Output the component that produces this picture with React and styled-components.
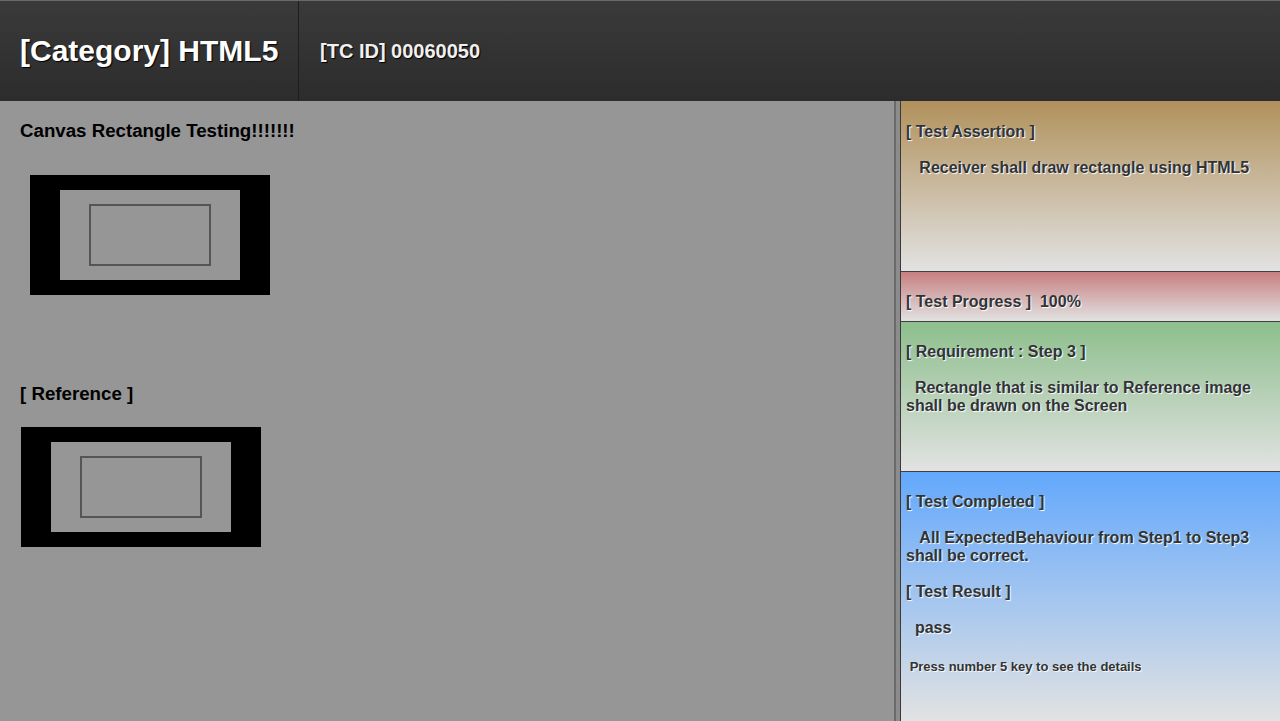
import React from 'react';
import styled, { createGlobalStyle } from 'styled-components';

const GlobalStyle = createGlobalStyle`
  html, body {
    margin: 0;
    padding: 0;
    background: #969696;
    font-family: "Liberation Sans", Arial, sans-serif;
  }
`;

const Page = styled.div`
  width: 1280px;
  height: 721px;
  display: flex;
  flex-direction: column;
  overflow: hidden;
`;

const Header = styled.div`
  height: 101px;
  flex: none;
  display: flex;
  align-items: stretch;
  background: linear-gradient(#3a3a3a, #2c2c2c);
  border-top: 1px solid #6a6a6a;
  box-sizing: border-box;
`;

const HeaderCell = styled.div`
  display: flex;
  align-items: center;
  flex: none;
  white-space: nowrap;
  padding: ${(p) => (p.$main ? '0 20px' : '0 21px')};
  color: ${(p) => (p.$main ? '#ffffff' : '#f0f0f0')};
  font-size: ${(p) => (p.$main ? '30px' : '20px')};
  font-weight: bold;
  text-shadow: 1px 1px 1px #000;
  border-right: ${(p) => (p.$main ? '1px solid #1e1e1e' : 'none')};
  width: ${(p) => (p.$main ? '299px' : 'auto')};
  box-sizing: border-box;
`;

const Body = styled.div`
  flex: 1;
  display: flex;
  min-height: 0;
`;

const Stage = styled.div`
  width: 894px;
  padding: 19px 20px 0;
  box-sizing: border-box;
  background: #969696;
`;

const StageTitle = styled.div`
  font-size: 18.7px;
  line-height: 21px;
  font-weight: bold;
  white-space: nowrap;
  color: #000;
  margin: ${(p) => p.$margin || '0'};
`;

const Figure = styled.svg`
  display: block;
  margin: ${(p) => p.$margin};
`;

const Divider = styled.div`
  width: 7px;
  background: linear-gradient(90deg, #6a6a6a 0 2px, #8c8c8c 2px 6px, #3a3a3a 6px);
`;

const Info = styled.div`
  flex: 1;
  display: flex;
  flex-direction: column;
`;

const Section = styled.div`
  height: ${(p) => p.$h};
  flex: ${(p) => (p.$grow ? 1 : 'none')};
  box-sizing: border-box;
  padding: ${(p) => p.$pad || '20px'} 5px 0;
  background: linear-gradient(${(p) => p.$from}, #e2e2e2);
  border-bottom: ${(p) => (p.$grow ? 'none' : '1px solid #404040')};
  color: #333;
  text-shadow: 1px 1px 1px #fff;
`;

const Heading = styled.div`
  font-size: 16px;
  line-height: 20px;
  font-weight: bold;
  white-space: pre-wrap;
`;

const Text = styled.div`
  font-size: ${(p) => (p.$small ? '13px' : '16px')};
  line-height: 18px;
  font-weight: bold;
  white-space: pre-wrap;
  margin-top: ${(p) => p.$top || '18px'};
`;

function RectDrawing() {
  return (
    <>
      <rect x="0" y="0" width="240" height="120" fill="#000" />
      <rect x="30" y="15" width="180" height="90" fill="#969696" />
      <rect x="60" y="30" width="120" height="60" fill="none" stroke="#555" strokeWidth="2" />
    </>
  );
}

export default function App() {
  return (
    <Page>
      <GlobalStyle />
      <Header>
        <HeaderCell $main>[Category] HTML5</HeaderCell>
        <HeaderCell>[TC ID] 00060050</HeaderCell>
      </Header>
      <Body>
        <Stage>
          <StageTitle $margin="0">Canvas Rectangle Testing!!!!!!!</StageTitle>
          <Figure width="240" height="120" $margin="34px 0 0 10px">
            <RectDrawing />
          </Figure>
          <StageTitle $margin="88px 0 0">[ Reference ]</StageTitle>
          <Figure width="240" height="120" $margin="23px 0 0 1px">
            <RectDrawing />
          </Figure>
        </Stage>
        <Divider />
        <Info>
          <Section $h="171px" $from="#b1915c" $pad="21px">
            <Heading>[ Test Assertion ]</Heading>
            <Text $top="17px">{'   Receiver shall draw rectangle using HTML5'}</Text>
          </Section>
          <Section $h="50px" $from="#c77f80">
            <Heading>{'[ Test Progress ]  100%'}</Heading>
          </Section>
          <Section $h="150px" $from="#8dbf8c">
            <Heading>[ Requirement : Step 3 ]</Heading>
            <Text $top="17px">{'  Rectangle that is similar to Reference image shall be drawn on the Screen'}</Text>
          </Section>
          <Section $grow $from="#63a8fc">
            <Heading>[ Test Completed ]</Heading>
            <Text $top="17px">{'   All ExpectedBehaviour from Step1 to Step3 shall be correct.'}</Text>
            <Text>[ Test Result ]</Text>
            <Text>{'  pass'}</Text>
            <Text $small $top="21px">{' Press number 5 key to see the details'}</Text>
          </Section>
        </Info>
      </Body>
    </Page>
  );
}
